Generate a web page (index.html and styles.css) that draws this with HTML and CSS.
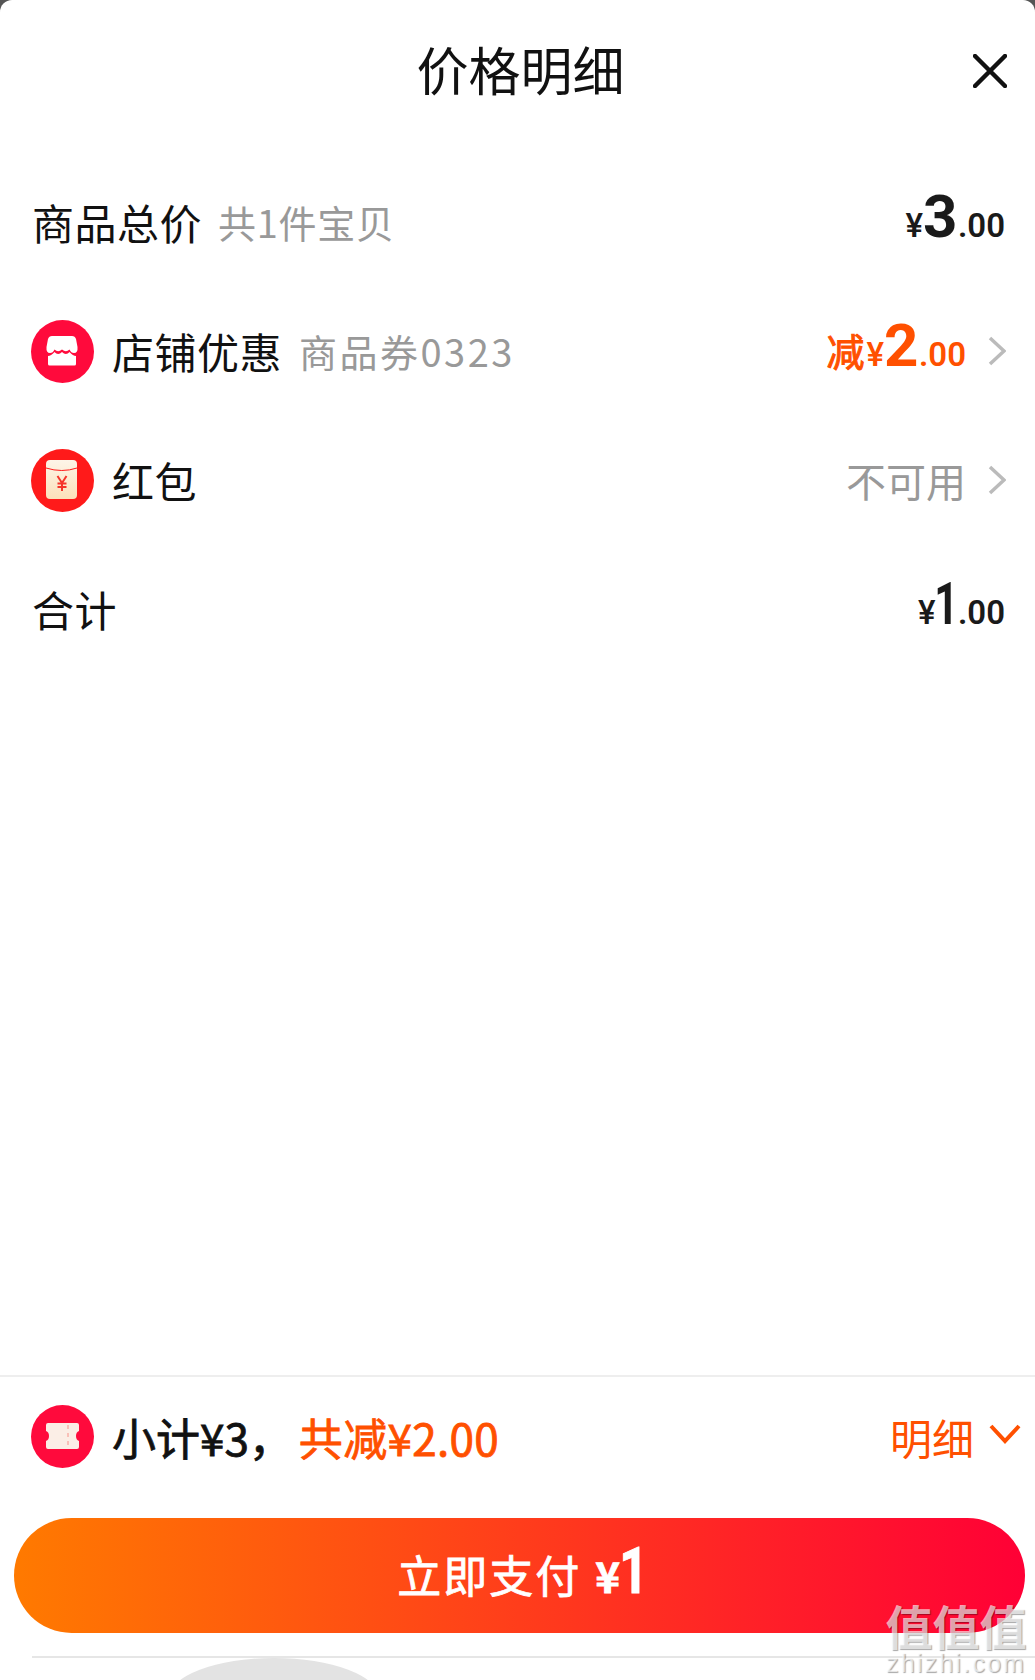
FILE: index.html
```html
<!DOCTYPE html>
<html lang="zh-CN">
<head>
    <meta charset="UTF-8">
    <meta name="viewport" content="width=device-width, initial-scale=1.0">
    <title>价格明细</title>
    <link rel="stylesheet" href="styles.css">
</head>
<body>
    <div class="sheet">
        <div class="header">
            <span></span>
            <h2 class="title">价格明细</h2>
            <svg class="close" viewBox="0 0 34 34">
                <path d="M2 2L32 32M32 2L2 32" fill="none" stroke="#111" stroke-width="4.500" stroke-linecap="round"/>
            </svg>
        </div>

        <div class="rows">
            <div class="row row-first">
                <span class="label">商品总价</span>
                <span class="note">共1件宝贝</span>
                <span class="price">
                    <span class="yen">¥</span><span class="big">3</span><span class="dec">.00</span>
                </span>
            </div>

            <div class="row">
                <svg class="badge" viewBox="0 0 63 63">
                    <circle cx="31.5" cy="31.5" r="31.5" fill="#ff0a3c"/>
                    <path d="M21 16H41Q44 16 45 19L46.500 27Q47 33 43 33Q40 33 38.500 29.500Q35 33 31 29.500Q27 33 23.500 29.500Q22 33 19 33Q15 33 15.500 27L17 19Q18 16 21 16Z" fill="#fff"/>
                    <path d="M17 36Q20 36 23.500 32Q27 36 31 32Q35 36 38.500 32Q42 36 45 36V44Q45 45.500 43.500 45.500H18.500Q17 45.500 17 44Z" fill="#fff"/>
                </svg>
                <span class="label">店铺优惠</span>
                <span class="note note-wide">商品券0323</span>
                <span class="price-group">
                    <span class="off-word">减</span>
                    <span class="price price-off">
                        <span class="yen">¥</span><span class="big">2</span><span class="dec">.00</span>
                    </span>
                </span>
                <svg class="arrow" viewBox="0 0 18 30">
                    <path d="M2 2L16 15L2 28" fill="none" stroke="#bbb" stroke-width="3.500"/>
                </svg>
            </div>

            <div class="row">
                <svg class="badge" viewBox="0 0 63 63">
                    <defs>
                        <linearGradient id="packFill" x1="0" y1="0" x2="0" y2="1">
                            <stop offset="0" stop-color="#fdf5e8"/>
                            <stop offset="1" stop-color="#fce0ba"/>
                        </linearGradient>
                    </defs>
                    <circle cx="31.5" cy="31.5" r="31.5" fill="#ff1a1a"/>
                    <rect x="15" y="11" width="31" height="39" rx="4" fill="url(#packFill)"/>
                    <path d="M15 19q16 5 31 0" fill="none" stroke="#ff1a1a" stroke-width="1"/>
                    <path d="M26.500 27l4.500 7l4.500-7M31 34v8M26.500 34.500h9M26.500 38h9" fill="none" stroke="#f5342a" stroke-width="2"/>
                </svg>
                <span class="label">红包</span>
                <span class="unavail">不可用</span>
                <svg class="arrow" viewBox="0 0 18 30">
                    <path d="M2 2L16 15L2 28" fill="none" stroke="#bbb" stroke-width="3.500"/>
                </svg>
            </div>

            <div class="row row-first">
                <span class="label">合计</span>
                <span class="price">
                    <span class="yen">¥</span><span class="big big-one">1</span><span class="dec">.00</span>
                </span>
            </div>
        </div>

        <div class="footer">
            <div class="summary">
                <svg class="badge" viewBox="0 0 63 63">
                    <circle cx="31.5" cy="31.5" r="31.5" fill="#ff0a3c"/>
                    <path d="M17 18h29q2 0 2 2v6q-3 1-3 5t3 5v6q0 2-2 2h-29q-2 0-2-2v-6q3-1 3-5t-3-5v-6q0-2 2-2z" fill="#fbeee6"/>
                    <path d="M37 20v24" fill="none" stroke="#f9c0b8" stroke-width="2" stroke-dasharray="4 4"/>
                </svg>
                <span class="sum-text">小计¥3，</span>
                <span class="sum-off">共减¥2.00</span>
                <span class="detail">明细</span>
                <svg class="down" viewBox="0 0 32 20">
                    <path d="M2 2L16 17L30 2" fill="none" stroke="#ff5000" stroke-width="4"/>
                </svg>
            </div>
            <button class="pay">立即支付 <span class="pay-yen">¥</span><span class="pay-num">1</span></button>
            <div class="bottom-line">
                <div class="home-bar"></div>
            </div>
        </div>

        <div class="watermark">
            <div class="wm-big">值值值</div>
            <div class="wm-small">zhizhi.com</div>
        </div>
    </div>
</body>
</html>
```

FILE: styles.css
```css
* {
    margin: 0;
    padding: 0;
    box-sizing: border-box;
    font-family: "Noto Sans CJK SC", "Noto Sans", sans-serif;
}
body {
    width: 1035px;
    height: 1680px;
    overflow: hidden;
    background: #555;
}
.sheet {
    position: relative;
    width: 1035px;
    height: 1680px;
    background: white;
    border-radius: 12px 12px 0 0;
    display: flex;
    flex-direction: column;
    color: #111;
}
.header {
    height: 136px;
    display: grid;
    grid-template-columns: 1fr auto 1fr;
    align-items: center;
    padding: 0 28px 0 34px;
}
.title {
    font-size: 52px;
    font-weight: 400;
    line-height: 1;
    margin-top: 1px;
}
.close {
    width: 34px;
    height: 34px;
    justify-self: end;
    margin-top: 6px;
}
.rows {
    display: flex;
    flex-direction: column;
    margin-top: 21px;
}
.row {
    height: 129px;
    display: flex;
    align-items: center;
    padding: 0 29px 0 31px;
}
.row-first {
    padding-left: 32px;
    padding-right: 30px;
}
.badge {
    width: 63px;
    height: 63px;
    margin-right: 18px;
    flex: none;
}
.row .badge {
    margin-top: 2px;
}
.label {
    font-size: 42px;
    letter-spacing: 0.5px;
}
.note {
    font-size: 38px;
    color: #999;
    margin-left: 16px;
    letter-spacing: 0.7px;
}
.note-wide {
    letter-spacing: 2.500px;
    margin-left: 17px;
}
.price-group {
    margin-left: auto;
    margin-bottom: 11px;
    display: flex;
    align-items: baseline;
}
.price {
    margin-left: auto;
    margin-bottom: 11px;
    display: flex;
    align-items: baseline;
    font-weight: 700;
    color: #1a1a1a;
}
.yen, .big, .dec {
    font-family: Roboto, sans-serif;
}
.yen {
    font-size: 33px;
    font-weight: 500;
}
.big {
    font-size: 60px;
    letter-spacing: -3.500px;
}
.big-one {
    letter-spacing: -12px;
    margin-left: -4px;
    transform: scaleX(0.7);
}
.dec {
    font-size: 33px;
    font-weight: 600;
    margin-left: 4px;
}
.price-off {
    color: #ff5000;
    margin-bottom: 0;
}
.off-word {
    font-size: 38px;
    color: #ff5000;
    -webkit-text-stroke: 1px #ff5000;
    margin-right: 2px;
}
.unavail {
    margin-left: auto;
    font-size: 40px;
    color: #999;
}
.arrow {
    width: 18px;
    height: 30px;
    margin-left: 22px;
}
.footer {
    margin-top: auto;
    border-top: 2px solid #eee;
}
.summary {
    height: 141px;
    display: flex;
    align-items: center;
    padding: 0 14px 22px 31px;
}
.sum-text {
    font-size: 44px;
    -webkit-text-stroke: 0.8px #111;
}
.sum-off {
    font-size: 44px;
    color: #ff5000;
    margin-left: 6px;
    letter-spacing: 0.3px;
    -webkit-text-stroke: 0.8px #ff5000;
}
.detail {
    margin-left: auto;
    font-size: 42px;
    color: #ff5000;
}
.down {
    width: 32px;
    height: 20px;
    margin-left: 15px;
    margin-bottom: 6px;
}
.pay {
    display: flex;
    justify-content: center;
    align-items: baseline;
    width: 1011px;
    height: 115px;
    margin-left: 14px;
    padding: 16px 0 0 5px;
    border: none;
    border-radius: 58px;
    background: linear-gradient(to right, #ff7a00, #ff0036);
    color: white;
    font-size: 44px;
    letter-spacing: 2px;
    white-space: pre;
    -webkit-text-stroke: 0.8px white;
}
.pay-yen {
    font-size: 42px;
    font-weight: 700;
    margin-left: 2px;
}
.pay-num {
    font-size: 64px;
    font-weight: 700;
    font-family: Roboto, sans-serif;
    letter-spacing: -6px;
    margin-left: -6px;
    transform: scaleX(0.8);
}
.bottom-line {
    margin: 23px 0 0 32px;
    border-top: 2px solid #e6e6e6;
    overflow: hidden;
    height: 24px;
}
.home-bar {
    width: 210px;
    height: 60px;
    margin-left: 137px;
    border-radius: 105px 105px 0 0 / 40px 40px 0 0;
    background: #e3e3e3;
}
/* sits on top of the button corner */
.watermark {
    position: absolute;
    right: 8px;
    bottom: 5px;
    width: 142px;
    text-align: center;
    color: rgba(255, 255, 255, 0.65);
    text-shadow: 1px 1px 1px rgba(0, 0, 0, 0.35);
}
.wm-big {
    font-size: 47px;
    font-weight: 700;
    line-height: 52px;
}
.wm-small {
    font-size: 25px;
    line-height: 24px;
    font-family: "Liberation Sans", sans-serif;
    letter-spacing: 2.200px;
    white-space: nowrap;
}
```
